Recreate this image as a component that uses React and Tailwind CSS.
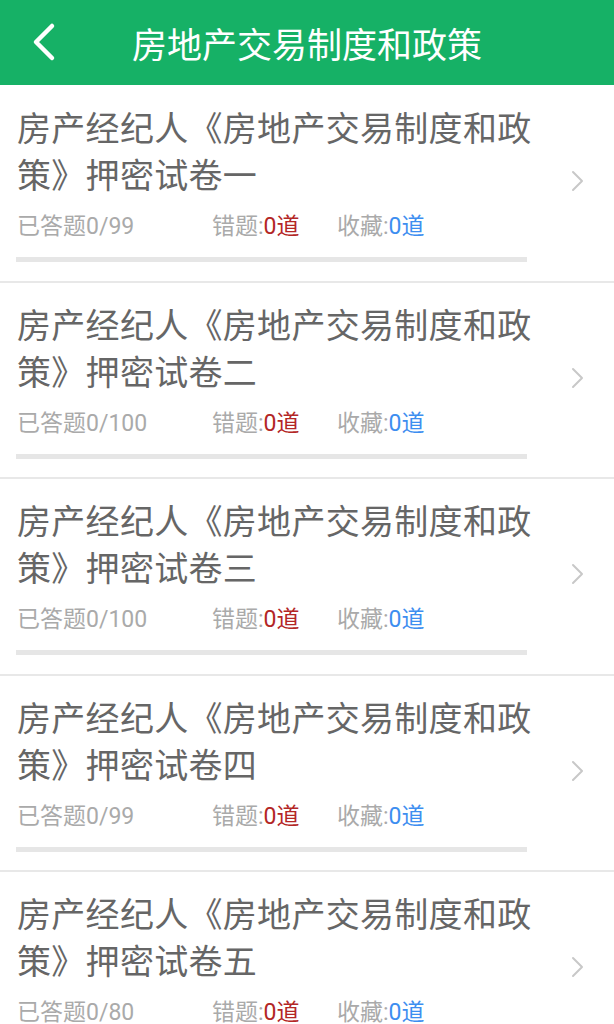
import React from "react";

const items = [
  { n: "一", total: 99 },
  { n: "二", total: 100 },
  { n: "三", total: 100 },
  { n: "四", total: 99 },
  { n: "五", total: 80 },
];

function Item({ n, total }) {
  return (
    <div className="flex border-b-2 border-[#e8e8e8] bg-white">
      <div className="flex-1 pl-[16px] pt-[17px] pb-[18.5px]">
        <div className="pl-[1px] text-[34px] leading-[47px] text-[#666666] tracking-[0.3px]">
          房产经纪人《房地产交易制度和政策》押密试卷{n}
        </div>
        <div className="mt-[15px] flex h-[30px] items-center pl-[1px] text-[23px] leading-[30px] text-[#aaaaaa]" style={{ fontFamily: 'Roboto, "Noto Sans CJK SC", sans-serif' }}>
          <span className="w-[195px]">已答题0/{total}</span>
          <span className="w-[125px]">
            错题:<span className="text-[#b32626]">0道</span>
          </span>
          <span>
            收藏:<span className="text-[#3d8ef0]">0道</span>
          </span>
        </div>
        <div className="mt-[15px] h-[5px] w-[511px] bg-[#e6e6e6]" />
      </div>
      <div className="flex w-[60px] items-center justify-start pl-[16px] pb-[4px]">
        <svg width="16" height="22" viewBox="0 0 16 22" fill="none">
          <polyline points="3,2 12,11 3,20" stroke="#c8c8c8" strokeWidth="2" strokeLinecap="round" strokeLinejoin="round" />
        </svg>
      </div>
    </div>
  );
}

export default function App() {
  return (
    <div className="h-[1024px] w-[614px] overflow-hidden bg-white" style={{ fontFamily: '"Noto Sans CJK SC", sans-serif' }}>
      <div className="relative flex h-[85px] items-center justify-center bg-[#16b166]">
        <svg className="absolute left-[29px] top-[21px]" width="30" height="42" viewBox="0 0 30 42" fill="none">
          <polyline points="23,5 7,21 23,37" stroke="#ffffff" strokeWidth="4.5" strokeLinecap="round" strokeLinejoin="round" />
        </svg>
        <div className="text-[35px] leading-[40px] text-white">房地产交易制度和政策</div>
      </div>
      <div className="h-[1px] bg-white" />
      {items.map((it) => (
        <Item key={it.n} {...it} />
      ))}
    </div>
  );
}
